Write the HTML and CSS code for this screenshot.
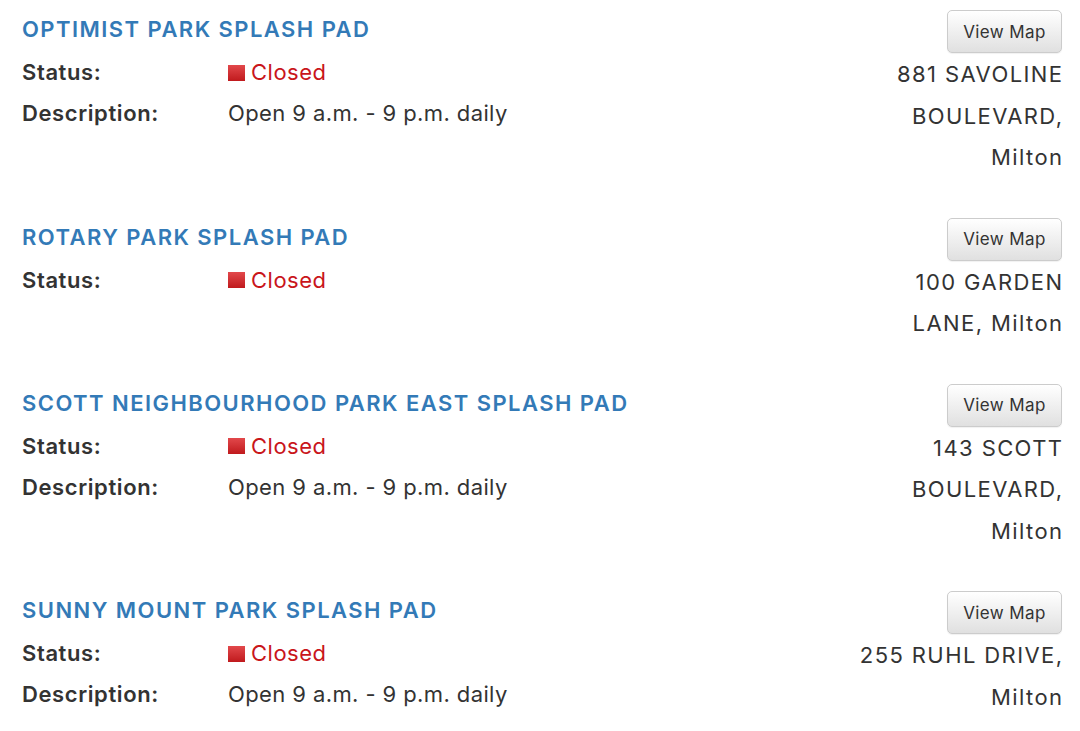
FILE: index.html
```html
<!DOCTYPE html>
<html lang="en">
<head>
<meta charset="utf-8">
<title>Splash Pads</title>
<link rel="stylesheet" href="styles.css">
</head>
<body>
<div class="list">
  <section class="pad">
    <div class="info">
      <h2 class="name">OPTIMIST PARK SPLASH PAD</h2>
      <div class="row"><span class="label">Status:</span><span class="value closed"><span class="sq"></span>Closed</span></div>
      <div class="row"><span class="label">Description:</span><span class="value">Open 9 a.m. - 9 p.m. daily</span></div>
    </div>
    <div class="side">
      <button class="btn">View Map</button>
      <div class="addr">881 SAVOLINE<br>BOULEVARD,<br>Milton</div>
    </div>
  </section>
  <section class="pad">
    <div class="info">
      <h2 class="name">ROTARY PARK SPLASH PAD</h2>
      <div class="row"><span class="label">Status:</span><span class="value closed"><span class="sq"></span>Closed</span></div>
    </div>
    <div class="side">
      <button class="btn">View Map</button>
      <div class="addr">100 GARDEN<br>LANE, Milton</div>
    </div>
  </section>
  <section class="pad">
    <div class="info">
      <h2 class="name">SCOTT NEIGHBOURHOOD PARK EAST SPLASH PAD</h2>
      <div class="row"><span class="label">Status:</span><span class="value closed"><span class="sq"></span>Closed</span></div>
      <div class="row"><span class="label">Description:</span><span class="value">Open 9 a.m. - 9 p.m. daily</span></div>
    </div>
    <div class="side">
      <button class="btn">View Map</button>
      <div class="addr">143 SCOTT<br>BOULEVARD,<br>Milton</div>
    </div>
  </section>
  <section class="pad">
    <div class="info">
      <h2 class="name">SUNNY MOUNT PARK SPLASH PAD</h2>
      <div class="row"><span class="label">Status:</span><span class="value closed"><span class="sq"></span>Closed</span></div>
      <div class="row"><span class="label">Description:</span><span class="value">Open 9 a.m. - 9 p.m. daily</span></div>
    </div>
    <div class="side">
      <button class="btn">View Map</button>
      <div class="addr">255 RUHL DRIVE,<br>Milton</div>
    </div>
  </section>
</div>
</body>
</html>
```
FILE: styles.css
```css
* { box-sizing: border-box; }
html, body { margin: 0; padding: 0; background: #fff; }
body {
  font-family: Inter, "Open Sans", "Liberation Sans", sans-serif;
  color: #333;
  font-size: 22px;
}
.list { padding: 10px 18px 0 22px; }
.pad {
  display: flex;
  justify-content: space-between;
  align-items: flex-start;
  margin-bottom: 39px;
}
.name {
  margin: 0 0 4px 0;
  font-size: 22px;
  line-height: 38px;
  font-weight: 600;
  letter-spacing: 1.45px;
  color: #337ab7;
}
.row { display: flex; line-height: 41px; }
.label { width: 206px; font-weight: 600; letter-spacing: 0.6px; }
.value { letter-spacing: 0.4px; }
.closed { color: #c9151b; display: flex; align-items: center; letter-spacing: 0.5px; }
.sq {
  width: 17px; height: 16px;
  margin-right: 6px;
  background: linear-gradient(#e2484b, #c01a1d);
}
.side { display: flex; flex-direction: column; align-items: flex-end; }
.btn {
  width: 115px; height: 43px;
  font-family: inherit;
  font-size: 17px;
  letter-spacing: 0.4px;
  color: #333;
  border: 1px solid #ccc;
  border-radius: 5px;
  background: linear-gradient(#fff, #e0e0e0);
  box-shadow: 0 1px 1px rgba(0,0,0,0.06);
  padding: 0;
}
.addr {
  margin-top: 1px;
  text-align: right;
  line-height: 41.5px;
  letter-spacing: 1.4px;
  margin-right: -1.4px;
}
```
